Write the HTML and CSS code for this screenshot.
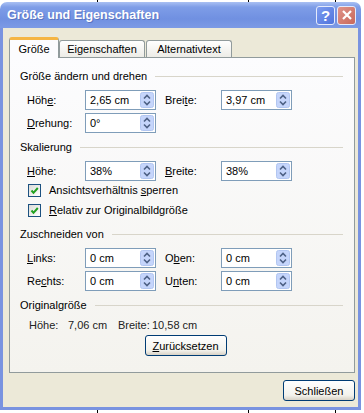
FILE: index.html
```html
<!DOCTYPE html>
<html>

<head>
  <meta charset="utf-8" />
  <title>Größe und Eigenschaften</title>
  <link rel="stylesheet" href="styles.css">
</head>

<body>
  <svg class="defs" width="0" height="0">
    <symbol id="arrows" viewBox="0 0 14 16">
      <rect x="0.5" y="0.5" width="13" height="15" rx="2" fill="#C5D5FB" stroke="#B2C6F1" />
      <path d="M4 6.5 L7 3.5 L10 6.5" fill="none" stroke="#4D6185" stroke-width="1.6" />
      <path d="M4 9.5 L7 12.5 L10 9.5" fill="none" stroke="#4D6185" stroke-width="1.6" />
    </symbol>
    <symbol id="check" viewBox="0 0 11 11">
      <path d="M2.5 5.5 L4.5 7.8 L8.8 3" fill="none" stroke="#21A121" stroke-width="2" />
    </symbol>
  </svg>

  <div class="ruler"></div>
  <div class="window">
    <div class="titlebar">
      <span class="title">Größe und Eigenschaften</span>
      <span class="tbtn help">?</span>
      <span class="tbtn close">
        <svg width="12" height="12" viewBox="0 0 12 12">
          <path d="M2 2 L10 10 M10 2 L2 10" stroke="#fff" stroke-width="2.2" />
        </svg>
      </span>
    </div>

    <div class="frame">
      <div class="tabs">
        <span class="tab active">Größe</span>
        <span class="tab">Eigenschaften</span>
        <span class="tab third">Alternativtext</span>
      </div>

      <div class="panel">
        <div class="group">Größe ändern und drehen</div>
        <div class="grid">
          <label>Höh<u>e</u>:</label>
          <div class="spin"><span>2,65 cm</span><svg><use href="#arrows" /></svg></div>
          <label class="second">Brei<u>t</u>e:</label>
          <div class="spin"><span>3,97 cm</span><svg><use href="#arrows" /></svg></div>
          <label><u>D</u>rehung:</label>
          <div class="spin"><span>0°</span><svg><use href="#arrows" /></svg></div>
        </div>

        <div class="group">Skalierung</div>
        <div class="grid">
          <label><u>H</u>öhe:</label>
          <div class="spin"><span>38%</span><svg><use href="#arrows" /></svg></div>
          <label class="second"><u>B</u>reite:</label>
          <div class="spin"><span>38%</span><svg><use href="#arrows" /></svg></div>
        </div>
        <div class="checks">
          <div class="check">
            <span class="box"><svg><use href="#check" /></svg></span>
            <span>Ansichtsverhältnis <u>s</u>perren</span>
          </div>
          <div class="check">
            <span class="box"><svg><use href="#check" /></svg></span>
            <span><u>R</u>elativ zur Originalbildgröße</span>
          </div>
        </div>

        <div class="group">Zuschneiden von</div>
        <div class="grid">
          <label><u>L</u>inks:</label>
          <div class="spin"><span>0 cm</span><svg><use href="#arrows" /></svg></div>
          <label class="second">O<u>b</u>en:</label>
          <div class="spin"><span>0 cm</span><svg><use href="#arrows" /></svg></div>
          <label>Re<u>c</u>hts:</label>
          <div class="spin"><span>0 cm</span><svg><use href="#arrows" /></svg></div>
          <label class="second">U<u>n</u>ten:</label>
          <div class="spin"><span>0 cm</span><svg><use href="#arrows" /></svg></div>
        </div>

        <div class="group">Originalgröße</div>
        <div class="info">
          <span class="k1">Höhe:</span>
          <span class="v1">7,06 cm</span>
          <span class="k2">Breite:</span>
          <span>10,58 cm</span>
        </div>
        <div class="reset">
          <button class="btn wide"><u>Z</u>urücksetzen</button>
        </div>
      </div>

      <div class="footer">
        <button class="btn">Schließen</button>
      </div>
    </div>
  </div>
  <div class="ruler bottom"></div>
</body>

</html>
```

FILE: styles.css
```css
html,
body {
  margin: 0;
  padding: 0;
}

body {
  width: 364px;
  height: 413px;
  background: #fff;
  font: 11px "Liberation Sans", Arial, sans-serif;
  color: #000;
  overflow: hidden;
}

.defs {
  position: absolute;
}

/* kleine Striche oben und unten (Lineal dahinter) */
.ruler {
  height: 2px;
  background:
    linear-gradient(#000, #000) 97px 0 / 1px 100% no-repeat,
    linear-gradient(#000, #000) 248px 0 / 1px 100% no-repeat,
    linear-gradient(#000, #000) 335px 0 / 1px 100% no-repeat;
}

.ruler.bottom {
  height: 3px;
}

.window {
  width: 361px;
}

.titlebar {
  height: 26px;
  display: flex;
  align-items: center;
  padding: 0 5px 0 7px;
  border-radius: 7px 7px 0 0;
  background: linear-gradient(#A9C0F3, #7E9DE7 20%, #7090E1 65%, #7C9AE5);
}

.title {
  flex: 1;
  color: #fff;
  font: bold 12.5px "Liberation Sans", Arial, sans-serif;
  text-shadow: 1px 1px #5A74C0;
}

.tbtn {
  width: 19px;
  height: 19px;
  margin-left: 2px;
  border: 1px solid #E4EAFB;
  border-radius: 3px;
  display: flex;
  align-items: center;
  justify-content: center;
  box-sizing: border-box;
}

.help {
  background: linear-gradient(135deg, #7D9CF0, #4F74DC);
  color: #fff;
  font: bold 15px "Liberation Sans", Arial, sans-serif;
}

.close {
  background: linear-gradient(135deg, #E0948A, #C8685B);
}

.frame {
  background: #ECE9D8;
  border: 3px solid #7993E0;
  border-top: none;
  padding: 9px 2px 0 6px;
}

.tabs {
  display: flex;
  align-items: flex-end;
  height: 20px;
}

.tab {
  width: 86px;
  height: 17px;
  box-sizing: border-box;
  border: 1px solid #919B9C;
  border-bottom: none;
  border-radius: 3px 3px 0 0;
  background: linear-gradient(#FFFFFF, #EDECE7);
  text-align: center;
  line-height: 16px;
}

.tab.third {
  margin-left: 1px;
}

.tab.active {
  width: 50px;
  height: 21px;
  margin-bottom: -1px;
  position: relative;
  z-index: 1;
  background: #FCFCFE;
  border-top: 3px solid #F5B543;
  line-height: 19px;
}

.panel {
  margin-right: 1px;
  border: 1px solid #919B9C;
  background: linear-gradient(#FCFCFE, #F4F3EE);
  padding: 11px 11px 16px 10px;
}

.group {
  display: flex;
  align-items: center;
  height: 14px;
  margin-top: 7px;
}

.group:first-child {
  margin-top: 0;
}

.group::after {
  content: "";
  flex: 1;
  margin-left: 8px;
  border-top: 1px solid #D8D5CA;
}

.grid {
  display: grid;
  grid-template-columns: 58px 71px 65px 71px;
  grid-auto-rows: 20px;
  row-gap: 3px;
  align-items: center;
  margin-top: 7px;
  padding-left: 7px;
}

.grid .second {
  padding-left: 9px;
}

.spin {
  height: 20px;
  box-sizing: border-box;
  border: 1px solid #7F9DB9;
  background: #fff;
  display: flex;
  align-items: center;
  padding: 1px;
}

.spin span {
  flex: 1;
  padding-left: 3px;
}

.spin svg {
  width: 14px;
  height: 16px;
}

.checks {
  margin-top: -1px;
  padding-left: 8px;
}

.check {
  height: 20px;
  display: flex;
  align-items: center;
}

.box {
  width: 13px;
  height: 13px;
  box-sizing: border-box;
  border: 1px solid #1C5180;
  background: linear-gradient(135deg, #DCDCD7, #FFFFFF);
  margin-right: 8px;
  display: flex;
}

.box svg {
  width: 11px;
  height: 11px;
}

.info {
  display: flex;
  height: 14px;
  align-items: center;
  margin-top: 6px;
  padding-left: 9px;
  color: #222;
  white-space: nowrap;
}

.info .k1 {
  width: 39px;
}

.info .v1 {
  width: 50px;
}

.info .k2 {
  width: 34px;
}

.reset {
  display: flex;
  justify-content: center;
  margin-top: 3px;
  padding-left: 8px;
}

.btn {
  width: 72px;
  height: 21px;
  padding: 0;
  border: 1px solid #003C74;
  border-radius: 3px;
  background: linear-gradient(#FFFFFF, #F3F2EC 75%, #D8D2C6);
  font: 11px "Liberation Sans", Arial, sans-serif;
  color: #000;
}

.btn.wide {
  width: 82px;
}

.footer {
  display: flex;
  justify-content: flex-end;
  padding: 7px 1px 6px 0;
}
```
